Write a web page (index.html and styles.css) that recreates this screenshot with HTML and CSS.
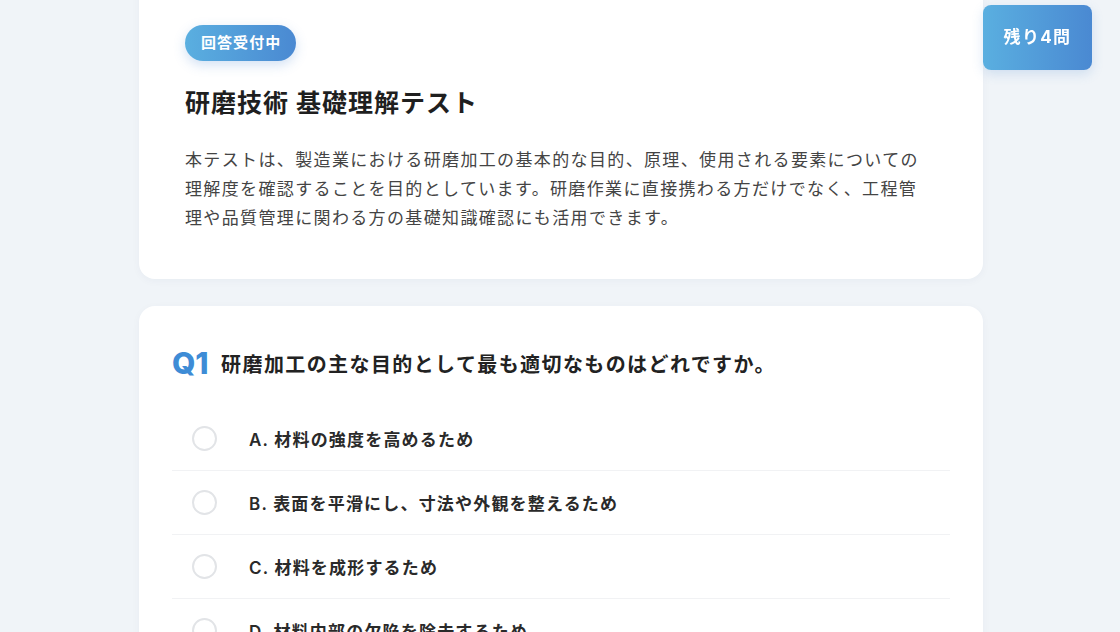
FILE: index.html
```html
<!DOCTYPE html>
<html lang="ja">
<head>
    <meta charset="UTF-8">
    <meta name="viewport" content="width=device-width, initial-scale=1.0">
    <title>研磨技術 基礎理解テスト</title>
    <link rel="stylesheet" href="styles.css">
</head>
<body>
    <div class="remain-badge">残り4問</div>

    <main class="container">
        <!-- Test header -->
        <section class="card intro">
            <span class="status-badge">回答受付中</span>
            <h1>研磨技術 基礎理解テスト</h1>
            <p class="description">本テストは、製造業における研磨加工の基本的な目的、原理、使用される要素についての理解度を確認することを目的としています。研磨作業に直接携わる方だけでなく、工程管理や品質管理に関わる方の基礎知識確認にも活用できます。</p>
        </section>

        <!-- Question 1 -->
        <section class="card question">
            <div class="question-title">
                <span class="q-num">Q1</span>
                <span class="q-text">研磨加工の主な目的として最も適切なものはどれですか。</span>
            </div>
            <ul class="options">
                <li class="option"><span class="radio"></span><span class="option-text">A. 材料の強度を高めるため</span></li>
                <li class="option"><span class="radio"></span><span class="option-text">B. 表面を平滑にし、寸法や外観を整えるため</span></li>
                <li class="option"><span class="radio"></span><span class="option-text">C. 材料を成形するため</span></li>
                <li class="option"><span class="radio"></span><span class="option-text">D. 材料内部の欠陥を除去するため</span></li>
            </ul>
        </section>
    </main>
</body>
</html>
```

FILE: styles.css
```css
body {
    font-family: "Inter", "Noto Sans CJK JP", sans-serif;
    margin: 0;
    padding: 0;
    background-color: #f0f4f8;
    color: #222222;
    overflow: hidden;
}

.container {
    width: 844px;
    margin: -24px auto 0 139px;
    display: flex;
    flex-direction: column;
    gap: 27px;
}

.card {
    background-color: #ffffff;
    border-radius: 16px;
    box-shadow: 0 2px 8px rgba(30, 60, 100, 0.04);
}

.intro {
    padding: 49px 62px 46px 46px;
}

.status-badge {
    display: inline-block;
    padding: 0 15px 0 16px;
    height: 36px;
    line-height: 36px;
    border-radius: 18px;
    font-size: 15px;
    font-weight: 700;
    color: #ffffff;
    letter-spacing: 0.07em;
    background: linear-gradient(to right, #5aafe0, #4a89d2);
    box-shadow: 0 4px 12px rgba(74, 137, 210, 0.25);
}

h1 {
    font-size: 25px;
    font-weight: 700;
    letter-spacing: 0.04em;
    margin: 24px 0 25px;
    line-height: 36px;
    color: #1f1f1f;
}

.description {
    margin: 0;
    font-size: 17px;
    line-height: 29px;
    letter-spacing: 0.08em;
    color: #444444;
}

.question {
    padding: 32px 33px 40px;
}

.question-title {
    display: flex;
    align-items: center;
    gap: 13px;
    height: 50px;
    margin-bottom: 19px;
}

.q-num {
    font-size: 30px;
    font-weight: 800;
    color: #3e8cd6;
    letter-spacing: -0.01em;
}

.q-text {
    font-size: 20px;
    font-weight: 700;
    letter-spacing: 0.07em;
    color: #222222;
}

.options {
    list-style: none;
    margin: 0;
    padding: 0;
}

.option {
    display: flex;
    align-items: center;
    gap: 32px;
    height: 63px;
    padding: 0 20px;
    border-bottom: 1px solid #f1f2f4;
}

.radio {
    width: 21px;
    height: 21px;
    border: 2px solid #e2e4e7;
    border-radius: 50%;
    flex-shrink: 0;
}

.option-text {
    font-size: 17px;
    font-weight: 600;
    letter-spacing: 0.07em;
    color: #2a2a2a;
}

.remain-badge {
    position: fixed;
    top: 5px;
    right: 28px;
    width: 109px;
    height: 65px;
    line-height: 65px;
    text-align: center;
    border-radius: 8px;
    font-size: 17px;
    font-weight: 700;
    color: #ffffff;
    letter-spacing: 0.08em;
    background: linear-gradient(to right, #5aafe0, #4a89d2);
    box-shadow: 0 4px 12px rgba(74, 137, 210, 0.2);
}
```
